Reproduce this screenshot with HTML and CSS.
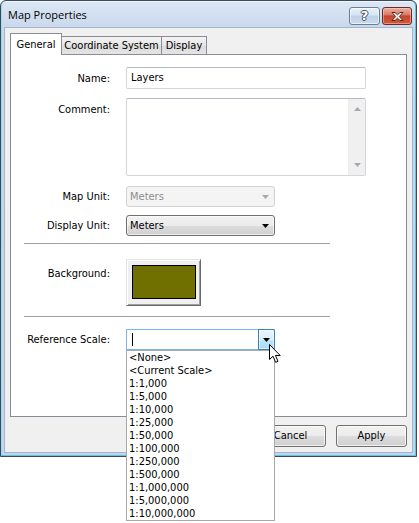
FILE: index.html
```html
<!DOCTYPE html>
<html>
<head>
<meta charset="utf-8">
<title>Map Properties</title>
<link rel="stylesheet" href="styles.css">
</head>
<body>
<div class="window">
  <div class="titlebar">
    <span class="title">Map Properties</span>
    <div class="caption-btns">
      <div class="cap-btn help"><span class="help-glyph">?</span></div>
      <div class="cap-btn close">
        <svg width="13" height="11" viewBox="0 0 13 11"><path d="M1 1.5 L4 1.5 L6.5 3.8 L9 1.5 L12 1.5 L8.3 5.5 L12 9.5 L9 9.5 L6.5 7.2 L4 9.5 L1 9.5 L4.7 5.5 Z" fill="#fff" stroke="#5a2419" stroke-width="1" stroke-linejoin="round"/></svg>
      </div>
    </div>
  </div>
  <div class="client">
    <div class="tabs">
      <div class="tab active tab-general">General</div>
      <div class="tab tab-coord">Coordinate System</div>
      <div class="tab tab-display">Display</div>
    </div>
    <div class="panel">
      <div class="row row-name">
        <span class="lbl">Name:</span>
        <div class="textbox">Layers</div>
      </div>
      <div class="row row-comment">
        <span class="lbl lbl-top">Comment:</span>
        <div class="textarea">
          <div class="vscroll">
            <svg class="sarrow" width="7" height="4" viewBox="0 0 7 4"><path d="M0 4 L3.5 0 L7 4 Z" fill="#a8a8a8"/></svg>
            <svg class="sarrow" width="7" height="4" viewBox="0 0 7 4"><path d="M0 0 L7 0 L3.5 4 Z" fill="#a8a8a8"/></svg>
          </div>
        </div>
      </div>
      <div class="row row-mapunit">
        <span class="lbl">Map Unit:</span>
        <div class="combo disabled">
          <span class="combo-text">Meters</span>
          <svg width="7" height="4" viewBox="0 0 7 4"><path d="M0 0 L7 0 L3.5 4 Z" fill="#a9a9a9"/></svg>
        </div>
      </div>
      <div class="row row-dispunit">
        <span class="lbl">Display Unit:</span>
        <div class="combo">
          <span class="combo-text">Meters</span>
          <svg width="7" height="4" viewBox="0 0 7 4"><path d="M0 0 L7 0 L3.5 4 Z" fill="#000"/></svg>
        </div>
      </div>
      <div class="sep sep1"></div>
      <div class="row row-bg">
        <span class="lbl lbl-top">Background:</span>
        <div class="colorbtn"><div class="swatch"></div></div>
      </div>
      <div class="sep sep2"></div>
      <div class="row row-scale">
        <span class="lbl">Reference Scale:</span>
        <div class="combo-edit">
          <div class="edit"><span class="caret"></span></div>
          <div class="dropbtn">
            <svg width="7" height="4" viewBox="0 0 7 4"><path d="M0 0 L7 0 L3.5 4 Z" fill="#000"/></svg>
          </div>
        </div>
      </div>
    </div>
    <div class="buttons">
      <div class="btn">OK</div>
      <div class="btn">Cancel</div>
      <div class="btn">Apply</div>
    </div>
  </div>
</div>

<ul class="droplist">
  <li>&lt;None&gt;</li>
  <li>&lt;Current Scale&gt;</li>
  <li>1:1,000</li>
  <li>1:5,000</li>
  <li>1:10,000</li>
  <li>1:25,000</li>
  <li>1:50,000</li>
  <li>1:100,000</li>
  <li>1:250,000</li>
  <li>1:500,000</li>
  <li>1:1,000,000</li>
  <li>1:5,000,000</li>
  <li>1:10,000,000</li>
</ul>

<svg class="cursor" width="14" height="20" viewBox="0 0 14 20">
  <path d="M0.5 0.5 L0.5 15.5 L4 12.2 L6.6 18.3 L9 17.3 L6.5 11.5 L11.2 11.5 Z" fill="#fff" stroke="#000" stroke-width="1" stroke-linejoin="miter"/>
</svg>
</body>
</html>
```

FILE: styles.css
```css
* {
  box-sizing: border-box;
}

html,
body {
  margin: 0;
  padding: 0;
  background: #fff;
}

body {
  width: 419px;
  height: 523px;
  overflow: hidden;
  position: relative;
  font-family: "DejaVu Sans Condensed", "DejaVu Sans", sans-serif;
  font-size: 11px;
  color: #000;
}

/* ---------- window frame ---------- */
.window {
  width: 417px;
  height: 457px;
  border: 1px solid #3a4a5c;
  border-radius: 6px 6px 0 0;
  background: linear-gradient(#dce7f4 0, #c9d9ec 26px, #c3d5ea 100%);
  padding: 0 3px 3px;
  display: flex;
  flex-direction: column;
  box-shadow: inset -1px 0 #5cc6e2, inset 0 -1px #5cc6e2, inset 1px 0 #a6d6ea, inset 0 1px #f3f7fc;
}

.titlebar {
  height: 26px;
  display: flex;
  justify-content: space-between;
  align-items: flex-start;
  flex: none;
}

.title {
  font-family: "Open Sans", "Noto Sans", sans-serif;
  font-size: 11px;
  line-height: 14px;
  margin-top: 7px;
  padding-left: 4px;
  color: #000;
}

.caption-btns {
  display: flex;
  gap: 2px;
  margin-top: 6px;
  margin-right: 1px;
}

.cap-btn {
  height: 18px;
  border: 1px solid;
  border-radius: 3px;
  display: flex;
  align-items: center;
  justify-content: center;
}

.help {
  width: 31px;
  border-color: #6d7e94;
  background: linear-gradient(#eaf1f9 0%, #d6e3f2 45%, #bdd0e7 50%, #cbdcef 100%);
  box-shadow: inset 0 0 0 1px rgba(255, 255, 255, 0.55);
}

.help-glyph {
  font-family: "DejaVu Sans", sans-serif;
  font-weight: bold;
  font-size: 13px;
  line-height: 14px;
  color: #fff;
  text-shadow: -1px 0 #3f4d60, 1px 0 #3f4d60, 0 -1px #3f4d60, 0 1px #3f4d60;
}

.close {
  width: 30px;
  border-color: #6b2a1f;
  background: linear-gradient(#eab0a4 0%, #d97a66 42%, #c4452c 50%, #d4593c 100%);
  box-shadow: inset 0 0 0 1px rgba(255, 220, 210, 0.45);
}

/* ---------- client area ---------- */
.client {
  height: 426px;
  flex: none;
  border: 1px solid #a4b6cc;
  background: #f0f0f0;
  padding: 5px 5px 0;
  display: flex;
  flex-direction: column;
}

.tabs {
  height: 21px;
  display: flex;
  align-items: flex-end;
  flex: none;
}

.tab {
  height: 18px;
  border: 1px solid #898c95;
  border-bottom: none;
  border-left: none;
  background: linear-gradient(#f4f4f4, #e6e6e6 50%, #dcdcdc 51%, #e4e4e4);
  line-height: 17px;
  text-align: center;
  white-space: nowrap;
}

.tab-general {
  width: 52px;
}

.tab-coord {
  width: 100px;
}

.tab-display {
  width: 45px;
}

.tab.active {
  height: 22px;
  margin-bottom: -1px;
  border-left: 1px solid #898c95;
  background: #fff;
  line-height: 21px;
  position: relative;
  z-index: 1;
}

.panel {
  height: 363px;
  flex: none;
  border: 1px solid #898c95;
  background: #fff;
  display: flex;
  flex-direction: column;
}

.row {
  display: flex;
  align-items: center;
  flex: none;
}

.lbl {
  width: 99px;
  margin-right: 16px;
  text-align: right;
  flex: none;
  line-height: 13px;
}

.lbl-top {
  align-self: flex-start;
}

.row-name {
  margin-top: 12px;
}

.textbox {
  width: 240px;
  height: 22px;
  border: 1px solid #d3d6dc;
  border-top-color: #b5b9c1;
  border-radius: 2px;
  padding-left: 4px;
  line-height: 20px;
  background: #fff;
}

.row-comment {
  margin-top: 9px;
}

.row-comment .lbl {
  padding-top: 5px;
}

.textarea {
  width: 240px;
  height: 78px;
  border: 1px solid #d3d6dc;
  border-top-color: #b5b9c1;
  border-radius: 2px;
  background: #fff;
  display: flex;
  justify-content: flex-end;
}

.vscroll {
  width: 17px;
  height: 100%;
  background: #f0f0f0;
  border-left: 1px solid #ececec;
  display: flex;
  flex-direction: column;
  justify-content: space-between;
  align-items: center;
  padding: 8px 0 8px;
}

.sarrow {
  display: block;
}

.combo {
  width: 149px;
  height: 21px;
  border: 1px solid #707070;
  border-radius: 3px;
  background: linear-gradient(#f3f3f3 0%, #ebebeb 50%, #dddddd 51%, #d0d0d0 100%);
  box-shadow: inset 0 0 0 1px rgba(255, 255, 255, 0.6);
  display: flex;
  align-items: center;
  justify-content: space-between;
  padding: 0 5px 0 3px;
}

.combo-text {
  line-height: 13px;
}

.combo.disabled {
  border-color: #d2d2d2;
  background: #f4f4f4;
  box-shadow: none;
  color: #8d8d8d;
}

.row-mapunit {
  margin-top: 10px;
}

.row-dispunit {
  margin-top: 8px;
}

.sep {
  width: 306px;
  margin-left: 13px;
  border-top: 1px solid #a0a0a0;
  flex: none;
}

.sep1 {
  margin-top: 7px;
}

.row-bg {
  margin-top: 15px;
}

.row-bg .lbl {
  padding-top: 8px;
}

.colorbtn {
  width: 75px;
  height: 47px;
  background: #f0f0f0;
  border: 1px solid;
  border-color: #e3e3e3 #696969 #696969 #e3e3e3;
  box-shadow: inset 1px 1px #fff, inset -1px -1px #a0a0a0;
  padding: 5px 0 0 5px;
}

.swatch {
  width: 64px;
  height: 34px;
  background: #707000;
  border: 1px solid #000;
}

.sep2 {
  margin-top: 10px;
}

.row-scale {
  margin-top: 12px;
}

.combo-edit {
  width: 149px;
  height: 21px;
  border: 1px solid #7eb4ea;
  border-right: none;
  display: flex;
  background: #fff;
}

.edit {
  flex: 1;
  display: flex;
  align-items: center;
  padding-left: 5px;
}

.caret {
  width: 1px;
  height: 13px;
  background: #000;
}

.dropbtn {
  width: 17px;
  margin-top: -1px;
  margin-bottom: -1px;
  border: 1px solid #3c7fb1;
  border-radius: 0 2px 2px 0;
  background: linear-gradient(#eaf6fd 0%, #d9f0fc 50%, #bee6fd 51%, #a7d9f5 100%);
  box-shadow: inset 0 0 0 1px rgba(255, 255, 255, 0.55);
  display: flex;
  align-items: center;
  justify-content: center;
}

/* ---------- dialog buttons ---------- */
.buttons {
  margin-top: 8px;
  display: flex;
  justify-content: flex-end;
  gap: 10px;
  flex: none;
}

.btn {
  width: 71px;
  height: 22px;
  border: 1px solid #707070;
  border-radius: 3px;
  background: linear-gradient(#f2f2f2 0%, #ebebeb 50%, #dddddd 51%, #cfcfcf 100%);
  box-shadow: inset 0 0 0 1px rgba(255, 255, 255, 0.7);
  text-align: center;
  line-height: 20px;
}

/* ---------- dropped list (overlay) ---------- */
.droplist {
  position: absolute;
  left: 126px;
  top: 350px;
  width: 149px;
  height: 171px;
  margin: 0;
  padding: 0;
  list-style: none;
  background: #fff;
  border: 1px solid #a9a9a9;
}

.droplist li {
  height: 13px;
  line-height: 13px;
  padding-left: 2px;
  white-space: nowrap;
}

.cursor {
  position: absolute;
  left: 269px;
  top: 344px;
}
```
